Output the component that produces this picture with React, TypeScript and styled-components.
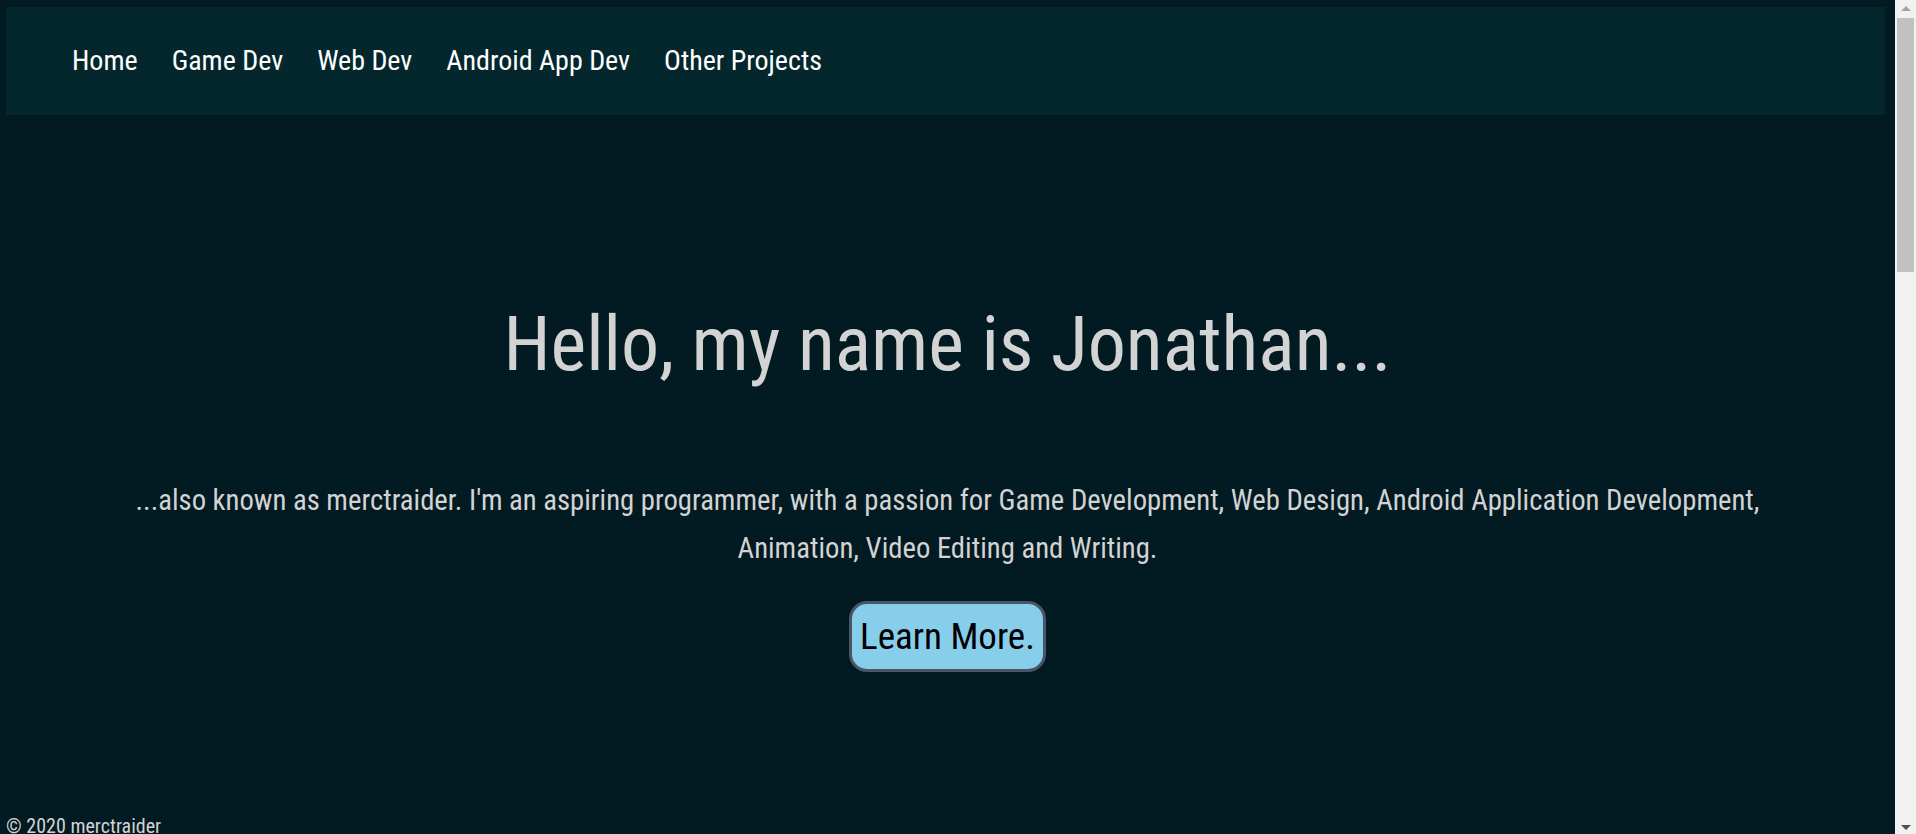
import styled, { createGlobalStyle } from 'styled-components';

const GlobalStyle = createGlobalStyle`
  html, body {
    margin: 0;
    padding: 0;
    background-color: #021a21;
  }
  body {
    font-family: "Roboto Condensed", "Liberation Sans", sans-serif;
  }
`;

const Page = styled.div`
  display: flex;
  flex-direction: column;
  padding-right: 21px;
`;

const NavBar = styled.nav`
  margin: 7px 10px 0 6px;
  height: 108px;
  background-color: #04272e;
  display: flex;
  align-items: center;
  padding-left: 66px;
  gap: 34px;
`;

const NavLink = styled.a`
  color: #ffffff;
  font-size: 28px;
  line-height: 1;
  text-decoration: none;
  cursor: pointer;
`;

const Hero = styled.section`
  display: flex;
  flex-direction: column;
  align-items: center;
  padding: 0 100px;
`;

const Heading = styled.h1`
  margin: 191px 0 0;
  font-size: 76px;
  font-weight: 400;
  line-height: 1;
  color: #d3d3d3;
`;

const Intro = styled.p`
  margin: 94px 0 0;
  max-width: 1680px;
  font-size: 28.7px;
  line-height: 48px;
  text-align: center;
  color: #d3d3d3;
`;

const LearnButton = styled.button`
  margin-top: 29px;
  height: 71px;
  padding: 0 8px;
  background-color: #87ceeb;
  border: 3px solid #4b5568;
  border-radius: 18px;
  font-family: inherit;
  font-size: 37px;
  line-height: 1;
  color: #000;
  cursor: pointer;
`;

const Footer = styled.footer`
  margin-top: 142px;
  padding: 0 0 1790px 6px;
  font-size: 20px;
  color: #d3d3d3;
`;

/* page scrollbar as it shows in the screenshot */
const ScrollTrack = styled.div`
  position: fixed;
  top: 0;
  right: 0;
  width: 21px;
  height: 100vh;
  background: #f1f1f1;
  display: flex;
  flex-direction: column;
  align-items: center;
`;

const Arrow = styled.div<{ $down?: boolean }>`
  width: 0;
  height: 0;
  border-left: 5px solid transparent;
  border-right: 5px solid transparent;
  ${(p) =>
    p.$down
      ? 'border-top: 5px solid #505050; margin-top: auto; margin-bottom: 4px;'
      : 'border-bottom: 5px solid #a3a3a3; margin-top: 6px;'}
`;

const Thumb = styled.div`
  margin-top: 7px;
  width: 17px;
  height: 254px;
  background: #c1c1c1;
`;

const links = ['Home', 'Game Dev', 'Web Dev', 'Android App Dev', 'Other Projects'];

export default function App() {
  return (
    <Page>
      <GlobalStyle />
      <NavBar>
        {links.map((l) => (
          <NavLink key={l}>{l}</NavLink>
        ))}
      </NavBar>
      <Hero>
        <Heading>Hello, my name is Jonathan...</Heading>
        <Intro>
          ...also known as merctraider. I'm an aspiring programmer, with a passion for Game
          Development, Web Design, Android Application Development, Animation, Video Editing and
          Writing.
        </Intro>
        <LearnButton>Learn More.</LearnButton>
      </Hero>
      <Footer>© 2020 merctraider</Footer>
      <ScrollTrack aria-hidden>
        <Arrow />
        <Thumb />
        <Arrow $down />
      </ScrollTrack>
    </Page>
  );
}
